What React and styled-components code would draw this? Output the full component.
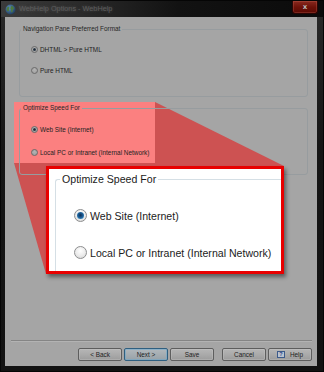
import React from 'react';
import styled, { createGlobalStyle } from 'styled-components';

const GlobalStyle = createGlobalStyle`
  html, body {
    margin: 0;
    padding: 0;
    background: #1a1a1a;
  }
  body {
    font-family: "Liberation Sans", Arial, sans-serif;
  }
`;

const Window = styled.div`
  width: 324px;
  height: 372px;
  box-sizing: border-box;
  display: flex;
  flex-direction: column;
  background: linear-gradient(180deg, #2a2a2a 0%, #151515 40%, #121212 100%);
  border: 1px solid #050505;
  overflow: hidden;
`;

const TitleBar = styled.div`
  height: 16px;
  display: flex;
  align-items: flex-start;
  padding-left: 4px;
  background: linear-gradient(90deg, #3b3b3b 0%, #2a2a2a 25%, #121212 55%, #0b0b0b 100%);
`;

const AppIcon = styled.svg`
  width: 11px;
  height: 11px;
  margin-top: 3px;
  flex: none;
`;

const Title = styled.span`
  margin-left: 3px;
  margin-top: 3px;
  font-size: 7.3px;
  line-height: 10px;
  color: #5c5c5c;
  text-shadow: 0 0 3px rgba(170, 170, 170, 0.35);
  white-space: nowrap;
`;

const CloseButton = styled.div`
  margin-left: auto;
  margin-right: 5px;
  width: 26px;
  height: 13px;
  box-sizing: border-box;
  border: 1px solid #2a0504;
  border-top: none;
  border-radius: 0 0 3px 3px;
  background: linear-gradient(180deg, #8a2a20 0%, #6e1209 50%, #5a0a04 100%);
  box-shadow: inset 0 0 0 1px rgba(220, 120, 100, 0.25);
  display: flex;
  align-items: center;
  justify-content: center;
  color: #b9b9b9;
  font-family: "DejaVu Sans", sans-serif;
  font-weight: bold;
  font-size: 7px;
  line-height: 1;
`;

const Client = styled.div`
  flex: 1;
  margin: 0 6px 5px 4px;
  padding: 8px 5px 5px 6px;
  position: relative;
  display: flex;
  flex-direction: column;
  background: #a5a5a5;
  color: #222;
  font-size: 6.4px;
`;

const Groups = styled.div`
  position: relative;
  z-index: 1;
  padding: 0 4px 0 8px;
`;

const GroupBox = styled.fieldset`
  margin: ${p => p.$top}px 0 0 0;
  padding: ${p => p.$pad};
  min-width: 0;
  border: 1px solid #979c9f;
  border-radius: 3px;
`;

const Legend = styled.legend`
  margin-left: 1px;
  padding: 0 2px;
  font-size: 6.4px;
  line-height: 8px;
  color: #262626;
`;

const OptionRow = styled.div`
  height: ${p => p.$h}px;
  display: flex;
  align-items: center;
  gap: ${p => (p.$big ? 3 : 2)}px;
  padding-left: ${p => (p.$big ? 18 : 11)}px;
  font-size: ${p => (p.$big ? 10.6 : 6.4)}px;
  white-space: nowrap;
`;

const Radio = styled.span`
  position: relative;
  flex: none;
  box-sizing: border-box;
  width: ${p => (p.$big ? 13 : 7)}px;
  height: ${p => (p.$big ? 13 : 7)}px;
  border-radius: 50%;
  border: 1px solid ${p => (p.$big ? '#8d8e8f' : '#6a6a6a')};
  background: ${p =>
    p.$big
      ? 'radial-gradient(circle at 50% 35%, #ffffff 0%, #ebebeb 55%, #d2d2d2 100%)'
      : 'radial-gradient(circle at 50% 35%, #b4b4b4 0%, #9d9d9d 100%)'};

  &::after {
    content: '';
    display: ${p => (p.$checked ? 'block' : 'none')};
    position: absolute;
    inset: ${p => (p.$big ? 2 : 1)}px;
    border-radius: 50%;
    background: ${p =>
      p.$big
        ? 'radial-gradient(circle at 50% 45%, #0b2c52 0%, #1b5a92 45%, #4aa8de 100%)'
        : 'radial-gradient(circle, #1d2833 0%, #3a4a5a 100%)'};
  }
`;

const Footer = styled.div`
  margin-top: auto;
  position: relative;
  z-index: 1;
`;

const Separator = styled.div`
  height: 0;
  border-top: 1px solid #858585;
  border-bottom: 1px solid #b3b3b3;
`;

const ButtonRow = styled.div`
  margin-top: 6px;
  display: flex;
  justify-content: flex-end;
  gap: 2px;
`;

const Button = styled.div`
  width: 44px;
  height: 13px;
  box-sizing: border-box;
  margin-left: ${p => (p.$spaced ? 6 : 0)}px;
  border: 1px solid ${p => (p.$primary ? '#2f5f80' : '#5e5e5e')};
  border-radius: 2px;
  background: ${p =>
    p.$primary
      ? 'linear-gradient(180deg, #b2b8bc 0%, #a5adb2 50%, #98a2a8 100%)'
      : 'linear-gradient(180deg, #b6b6b6 0%, #aaaaaa 50%, #9c9c9c 100%)'};
  box-shadow: inset 0 0 0 1px ${p => (p.$primary ? 'rgba(110,170,205,0.55)' : 'rgba(200,200,200,0.35)')};
  display: flex;
  align-items: center;
  justify-content: center;
  gap: 5px;
  font-size: 6.4px;
  color: #222;
`;

const HelpGlyph = styled.span`
  width: 8px;
  height: 7px;
  box-sizing: border-box;
  border: 1px solid #3c5a8a;
  background: #b9c2cf;
  color: #1f3f8a;
  font-weight: bold;
  font-size: 5.5px;
  line-height: 5px;
  text-align: center;
`;

const Highlight = styled.div`
  position: absolute;
  left: 9px;
  top: 85px;
  width: 141px;
  height: 61px;
  background: #fb8080;
  z-index: 0;
`;

const Beam = styled.svg`
  position: absolute;
  left: 0;
  top: 0;
  width: 100%;
  height: 100%;
  z-index: 0;
  pointer-events: none;
`;

const Callout = styled.div`
  position: absolute;
  left: 41px;
  top: 149px;
  width: 238px;
  height: 108px;
  box-sizing: border-box;
  z-index: 2;
  padding: 4px 0 0 6px;
  overflow: hidden;
  background: #fff;
  border: 3px solid #e80000;
  box-shadow: 2px 3px 4px rgba(0, 0, 0, 0.45);
  color: #1b1b1b;
`;

const CalloutGroup = styled.fieldset`
  margin: 0;
  padding: 11px 0 0 0;
  min-width: 0;
  border: 1px solid #d5dfe5;
  border-right: none;
  border-bottom: none;
  border-top-left-radius: 3px;
`;

const CalloutLegend = styled.legend`
  margin-left: 4px;
  padding: 0 2px;
  font-size: 10.6px;
  line-height: 13px;
`;

const Option = ({ big, checked, h, children }) => (
  <OptionRow $big={big} $h={h}>
    <Radio $big={big} $checked={checked} />
    <span>{children}</span>
  </OptionRow>
);

export default function App() {
  return (
    <>
      <GlobalStyle />
      <Window>
        <TitleBar>
          <AppIcon viewBox="0 0 22 22">
            <defs>
              <radialGradient id="globe" cx="40%" cy="35%" r="70%">
                <stop offset="0%" stopColor="#5f8fb8" />
                <stop offset="100%" stopColor="#1d3a5c" />
              </radialGradient>
            </defs>
            <circle cx="11" cy="11" r="10" fill="url(#globe)" />
            <path d="M5 6c2-1 4 0 4 2s-2 2-1 4-1 3-3 2-2-4-1-6z" fill="#4d7a3e" />
            <path d="M13 4c3 0 5 3 5 6-1 1-3 0-3 2s1 4-1 5c-2-1-2-3-2-5s-2-2-1-4 0-3 2-4z" fill="#4d7a3e" />
          </AppIcon>
          <Title>WebHelp Options - WebHelp</Title>
          <CloseButton>x</CloseButton>
        </TitleBar>

        <Client>
          <Beam viewBox="0 0 312 349" preserveAspectRatio="none">
            <polygon points="9,85 150,85 279,149 279,257 41,257 9,146" fill="#cd5252" />
          </Beam>
          <Highlight />

          <Groups>
            <GroupBox $top={0} $pad="6px 0 15px 0">
              <Legend>Navigation Pane Preferred Format</Legend>
              <Option h={21} checked>DHTML &gt; Pure HTML</Option>
              <Option h={21}>Pure HTML</Option>
            </GroupBox>
            <GroupBox $top={7} $pad="6px 0 10px 0">
              <Legend>Optimize Speed For</Legend>
              <Option h={23} checked>Web Site (Internet)</Option>
              <Option h={23}>Local PC or Intranet (Internal Network)</Option>
            </GroupBox>
          </Groups>

          <Footer>
            <Separator />
            <ButtonRow>
              <Button>&lt; Back</Button>
              <Button $primary>Next &gt;</Button>
              <Button>Save</Button>
              <Button $spaced>Cancel</Button>
              <Button>
                <HelpGlyph>?</HelpGlyph>
                Help
              </Button>
            </ButtonRow>
          </Footer>

          <Callout>
            <CalloutGroup>
              <CalloutLegend>Optimize Speed For</CalloutLegend>
              <Option big h={37} checked>Web Site (Internet)</Option>
              <Option big h={37}>Local PC or Intranet (Internal Network)</Option>
            </CalloutGroup>
          </Callout>
        </Client>
      </Window>
    </>
  );
}
